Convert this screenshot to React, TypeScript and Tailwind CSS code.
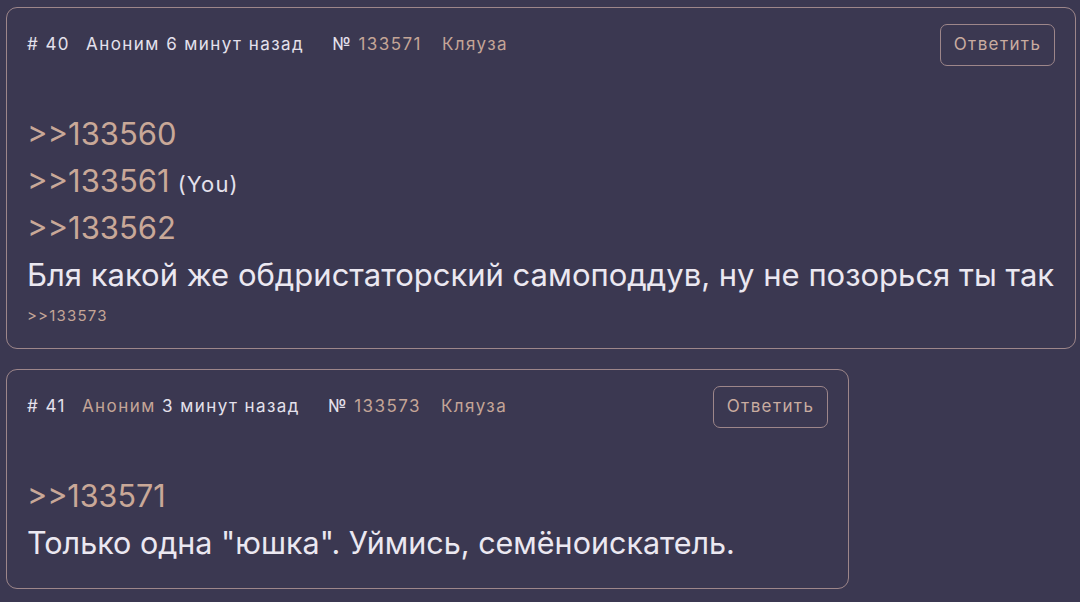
import React from 'react';

type Line = { kind: 'ref'; id: string; you?: boolean } | { kind: 'text'; text: string };

type Post = {
  num: number;
  nameTan: boolean;
  ago: string;
  id: string;
  lines: Line[];
  replies?: string[];
  width: string;
  textSize: string;
};

const posts: Post[] = [
  {
    num: 40,
    nameTan: false,
    ago: '6 минут назад',
    id: '133571',
    lines: [
      { kind: 'ref', id: '133560' },
      { kind: 'ref', id: '133561', you: true },
      { kind: 'ref', id: '133562' },
      { kind: 'text', text: 'Бля какой же обдристаторский самоподдув, ну не позорься ты так' },
    ],
    replies: ['133573'],
    width: 'w-[1070px]',
    textSize: 'text-[31px]',
  },
  {
    num: 41,
    nameTan: true,
    ago: '3 минут назад',
    id: '133573',
    lines: [
      { kind: 'ref', id: '133571' },
      { kind: 'text', text: 'Только одна "юшка". Уймись, семёноискатель.' },
    ],
    width: 'w-[843px]',
    textSize: 'text-[30.5px]',
  },
];

// карточка одного поста
function PostCard({ post }: { post: Post }) {
  return (
    <div className={`${post.width} rounded-[11px] border border-[#9d868a] pl-5 pr-5 pt-[16px] pb-[22px]`}>
      <div className="flex items-center justify-between h-[42px]">
        <div className="flex items-center text-[17px] tracking-[0.085em] text-[#e4e1ec]">
          <span># {post.num}</span>
          <span className="ml-[16px]">
            {post.nameTan ? <span className="text-[#c4a597]">Аноним</span> : 'Аноним'} {post.ago}
          </span>
          <span className="ml-[28px]">
            № <span className="text-[#c4a597]">{post.id}</span>
          </span>
          <span className="ml-[20px] text-[#c4a597]">Кляуза</span>
        </div>
        <button className="h-[42px] w-[115px] rounded-[7px] border border-[#9d868a] text-[17px] tracking-[0.08em] text-[#c9aca0]">
          Ответить
        </button>
      </div>

      <div className={`mt-[44px] ${post.textSize} leading-[47px]`}>
        {post.lines.map((l, i) =>
          l.kind === 'ref' ? (
            <div key={i} className="h-[47px] text-[#c9a898]">
              &gt;&gt;{l.id}
              {l.you && <span className="ml-2 text-[22px] leading-none tracking-[0.05em] text-[#e4e1ec]">(You)</span>}
            </div>
          ) : (
            <div key={i} className="h-[47px] text-[#ebe8f1] whitespace-nowrap">
              {l.text}
            </div>
          )
        )}
      </div>

      {post.replies && (
        <div className="mt-[8px] text-[15px] leading-[20px] tracking-[0.08em] text-[#c4a597]">
          {post.replies.map((r) => (
            <span key={r}>&gt;&gt;{r}</span>
          ))}
        </div>
      )}
    </div>
  );
}

export default function App() {
  return (
    <div
      className="w-[1080px] h-[602px] overflow-hidden bg-[#3b3851] pl-[6px] pt-[7px] flex flex-col gap-[20px]"
      style={{ fontFamily: 'Inter, "Noto Sans", sans-serif' }}
    >
      {posts.map((p) => (
        <PostCard key={p.num} post={p} />
      ))}
    </div>
  );
}
